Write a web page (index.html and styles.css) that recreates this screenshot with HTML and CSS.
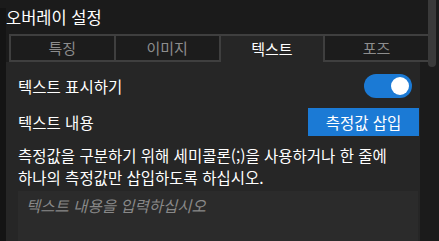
FILE: index.html
```html
<!DOCTYPE html>
<html lang="ko">
<head>
<meta charset="utf-8">
<link rel="stylesheet" href="styles.css">
</head>
<body>
<div class="app">
  <div class="edge"></div>
  <div class="main">
    <div class="title">오버레이 설정</div>
    <div class="tabs">
      <div class="tab">특징</div>
      <div class="tab">이미지</div>
      <div class="tab active">텍스트</div>
      <div class="tab">포즈</div>
    </div>
    <div class="panel">
      <div class="row first">
        <span class="label">텍스트 표시하기</span>
        <span class="toggle"><span class="knob"></span></span>
      </div>
      <div class="row second">
        <span class="label">텍스트 내용</span>
        <button class="btn">측정값 삽입</button>
      </div>
      <p class="desc">측정값을 구분하기 위해 세미콜론(;)을 사용하거나 한 줄에 하나의 측정값만 삽입하도록 하십시오.</p>
      <div class="input">텍스트 내용을 입력하십시오</div>
    </div>
  </div>
  <div class="scroll"><div class="thumb"></div></div>
</div>
</body>
</html>
```
FILE: styles.css
```css
html, body {
  margin: 0;
  padding: 0;
  background: #1b1b1b;
  width: 439px;
  height: 241px;
  overflow: hidden;
  font-family: "Noto Sans CJK KR", "Noto Sans", sans-serif;
  color: #ffffff;
}
.app {
  display: flex;
  height: 241px;
}
.edge {
  width: 6px;
  background: #141414;
  margin-top: 8px;
}
.main {
  width: 414px;
  display: flex;
  flex-direction: column;
}
.title {
  font-size: 16.5px;
  line-height: 20px;
  padding-top: 7px;
  height: 36px;
  box-sizing: border-box;
  color: #ffffff;
}
.tabs {
  display: flex;
  margin-left: 3px;
  margin-right: -8px;
  height: 31px;
}
.tab {
  flex: 1;
  box-sizing: border-box;
  border: 2px solid #3f3f3f;
  border-right-width: 1px;
  border-left-width: 1px;
  background: #1c1c1c;
  color: #8d8d8d;
  font-size: 15px;
  display: flex;
  align-items: center;
  justify-content: center;
}
.tab:first-child { border-left-width: 2px; }
.tab:last-child { border-right-width: 0; }
.tab.active {
  background: #262626;
  border-bottom: none;
  color: #ffffff;
}
.panel {
  flex: 1;
  background: #262626;
  padding: 0 0 0 12px;
}
.row {
  display: flex;
  align-items: center;
  justify-content: space-between;
}
.row.first { margin-top: 12px; height: 24px; }
.row.second { margin-top: 10px; height: 28px; }
.label { font-size: 15.5px; color: #ffffff; }
.toggle {
  width: 48px;
  height: 24px;
  border-radius: 12px;
  background: #1b7ad5;
  margin-right: 8px;
  position: relative;
}
.knob {
  position: absolute;
  right: 3px;
  top: 3px;
  width: 18px;
  height: 18px;
  border-radius: 50%;
  background: #ffffff;
}
.btn {
  width: 111px;
  height: 28px;
  border: none;
  background: #1b7ad5;
  color: #ffffff;
  font-family: inherit;
  font-size: 15.5px;
  padding: 0;
  margin-right: 1px;
}
.desc {
  margin: 8px 0 0 0;
  font-size: 15.5px;
  line-height: 22px;
  color: #ffffff;
  word-break: keep-all;
}
.input {
  margin-top: 3px;
  margin-right: 2px;
  height: 50px;
  background: #2b2b2b;
  color: #888888;
  font-style: italic;
  font-size: 15.5px;
  line-height: 20px;
  padding: 4px 0 0 8px;
  box-sizing: border-box;
}
.scroll {
  width: 19px;
  position: relative;
}
.thumb {
  position: absolute;
  left: 8px;
  top: 0;
  width: 8px;
  height: 67px;
  border-radius: 0 0 4px 4px;
  background: #3a3a3a;
}
```
